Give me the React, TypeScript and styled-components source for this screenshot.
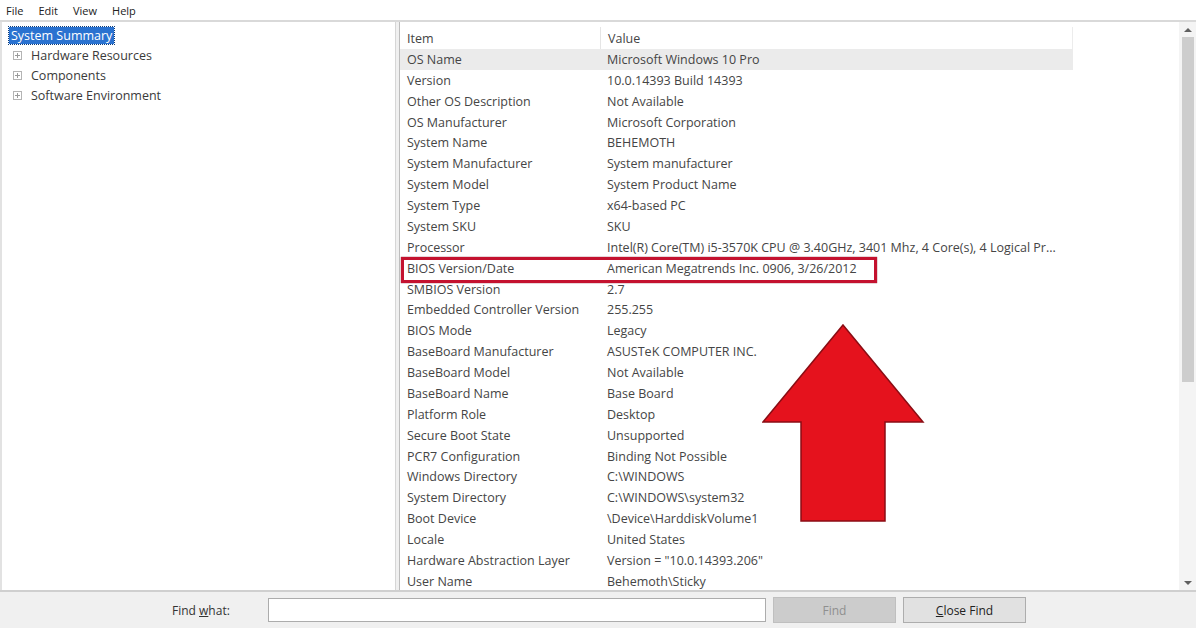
import styled, { createGlobalStyle } from 'styled-components'

const GlobalStyle = createGlobalStyle`
    *, *::before, *::after {
        box-sizing: border-box;
    }
    html, body {
        margin: 0;
        padding: 0;
        background: #ffffff;
    }
    body {
        font-family: "Open Sans", "Noto Sans", "Liberation Sans", sans-serif;
        color: #454545;
    }
`

const rows: [string, string][] = [
    ['OS Name', 'Microsoft Windows 10 Pro'],
    ['Version', '10.0.14393 Build 14393'],
    ['Other OS Description', 'Not Available'],
    ['OS Manufacturer', 'Microsoft Corporation'],
    ['System Name', 'BEHEMOTH'],
    ['System Manufacturer', 'System manufacturer'],
    ['System Model', 'System Product Name'],
    ['System Type', 'x64-based PC'],
    ['System SKU', 'SKU'],
    ['Processor', 'Intel(R) Core(TM) i5-3570K CPU @ 3.40GHz, 3401 Mhz, 4 Core(s), 4 Logical Pr...'],
    ['BIOS Version/Date', 'American Megatrends Inc. 0906, 3/26/2012'],
    ['SMBIOS Version', '2.7'],
    ['Embedded Controller Version', '255.255'],
    ['BIOS Mode', 'Legacy'],
    ['BaseBoard Manufacturer', 'ASUSTeK COMPUTER INC.'],
    ['BaseBoard Model', 'Not Available'],
    ['BaseBoard Name', 'Base Board'],
    ['Platform Role', 'Desktop'],
    ['Secure Boot State', 'Unsupported'],
    ['PCR7 Configuration', 'Binding Not Possible'],
    ['Windows Directory', 'C:\\WINDOWS'],
    ['System Directory', 'C:\\WINDOWS\\system32'],
    ['Boot Device', '\\Device\\HarddiskVolume1'],
    ['Locale', 'United States'],
    ['Hardware Abstraction Layer', 'Version = "10.0.14393.206"'],
    ['User Name', 'Behemoth\\Sticky'],
]

const Window = styled.div`
    width: 1196px;
    height: 628px;
    display: flex;
    flex-direction: column;
    overflow: hidden;
    background: #f0f0f0;
`

const MenuBar = styled.div`
    height: 22px;
    display: flex;
    align-items: center;
    gap: 15px;
    padding-left: 6px;
    background: #ffffff;
    font-size: 11px;
    color: #222;
    border-bottom: 2px solid #d9d9d9;
`

const Panes = styled.div`
    flex: 1;
    display: flex;
    min-height: 0;
    border-bottom: 2px solid #cfcfcf;
`

const TreePane = styled.div`
    width: 395px;
    background: #ffffff;
    border-left: 2px solid #e2e2e2;
    padding: 3px 0 0 7px;
    font-size: 12.5px;
`

const Splitter = styled.div`
    width: 5px;
    background: #f0f0f0;
    border-left: 1px solid #d6d6d6;
    border-right: 1px solid #bdbdbd;
`

const TreeItem = styled.div<{ $selected?: boolean }>`
    display: flex;
    align-items: center;
    height: 20px;
    gap: 7px;
    padding-left: ${(p) => (p.$selected ? '0' : '4px')};

    span.label {
        padding: 0 2px;
        line-height: 17px;
        color: ${(p) => (p.$selected ? '#ffffff' : '#3a3a3a')};
        background: ${(p) => (p.$selected ? '#2a72d0' : 'transparent')};
        outline: ${(p) => (p.$selected ? '1px dotted #0d3c7a' : 'none')};
    }
`

const Expander = styled.span`
    width: 9px;
    height: 9px;
    border: 1px solid #b4b4b4;
    position: relative;

    &::before, &::after {
        content: '';
        position: absolute;
        background: #9a9a9a;
    }
    &::before {
        left: 1px;
        right: 1px;
        top: 3px;
        height: 1px;
    }
    &::after {
        top: 1px;
        bottom: 1px;
        left: 3px;
        width: 1px;
    }
`

const ListPane = styled.div`
    flex: 1;
    position: relative;
    background: #ffffff;
    display: flex;
    overflow: hidden;
`

const Table = styled.div`
    width: 673px;
    padding-top: 5px;
    font-size: 12.5px;
`

const HeaderRow = styled.div`
    display: grid;
    grid-template-columns: 200px 1fr;
    height: 22px;
    align-items: center;
    color: #444;
    border-right: 1px solid #ececec;

    div {
        padding-left: 7px;
        height: 100%;
        display: flex;
        align-items: center;
    }
    div + div {
        border-left: 1px solid #e5e5e5;
    }
`

const Row = styled.div<{ $selected?: boolean; $marked?: boolean }>`
    position: relative;
    display: grid;
    grid-template-columns: 200px 1fr;
    height: 20.88px;
    align-items: center;
    background: ${(p) => (p.$selected ? '#ebebeb' : 'transparent')};

    div {
        padding-left: 7px;
        white-space: nowrap;
    }

    ${(p) =>
        p.$marked &&
        `
        &::after {
            content: '';
            position: absolute;
            left: 1px;
            top: -1px;
            width: 476px;
            height: 26px;
            border: 3px solid #c4122f;
            box-shadow: 0 0 1px #7a0a1a;
        }
    `}
`

const Scrollbar = styled.div`
    width: 17px;
    margin-left: auto;
    background: #f4f4f4;
    display: flex;
    flex-direction: column;
    align-items: center;
`

const ScrollArrow = styled.div<{ $down?: boolean }>`
    height: 15px;
    display: flex;
    align-items: center;
    justify-content: center;

    &::before {
        content: '';
        border-left: 4px solid transparent;
        border-right: 4px solid transparent;
        ${(p) => (p.$down ? 'border-top: 4px solid #606060;' : 'border-bottom: 4px solid #606060;')}
    }
`

const ScrollThumb = styled.div`
    width: 12px;
    height: 345px;
    background: #cdcdcd;
`

const ScrollTrack = styled.div`
    flex: 1;
`

const ArrowMark = styled.svg`
    position: absolute;
    left: 362px;
    top: 301px;
`

const FindBar = styled.div`
    height: 36px;
    display: flex;
    align-items: center;
    background: #f0f0f0;
    font-size: 12px;
    color: #333;
`

const FindLabel = styled.label`
    margin-left: 172px;
    width: 96px;
`

const FindInput = styled.div`
    width: 498px;
    height: 24px;
    background: #ffffff;
    border: 1px solid #acacac;
`

const FindButton = styled.div<{ $disabled?: boolean }>`
    width: 123px;
    height: 26px;
    margin-left: 7px;
    display: flex;
    align-items: center;
    justify-content: center;
    background: ${(p) => (p.$disabled ? '#cccccc' : '#e1e1e1')};
    border: 1px solid ${(p) => (p.$disabled ? '#bfbfbf' : '#adadad')};
    color: ${(p) => (p.$disabled ? '#8f8f8f' : '#222')};
`

export default function App() {
    return (
        <Window>
            <GlobalStyle />
            <MenuBar>
                <span>File</span>
                <span>Edit</span>
                <span>View</span>
                <span>Help</span>
            </MenuBar>
            <Panes>
                <TreePane>
                    <TreeItem $selected>
                        <span className="label">System Summary</span>
                    </TreeItem>
                    <TreeItem>
                        <Expander />
                        <span className="label">Hardware Resources</span>
                    </TreeItem>
                    <TreeItem>
                        <Expander />
                        <span className="label">Components</span>
                    </TreeItem>
                    <TreeItem>
                        <Expander />
                        <span className="label">Software Environment</span>
                    </TreeItem>
                </TreePane>
                <Splitter />
                <ListPane>
                    <Table>
                        <HeaderRow>
                            <div>Item</div>
                            <div>Value</div>
                        </HeaderRow>
                        {rows.map(([item, value], i) => (
                            <Row key={item} $selected={i === 0} $marked={item === 'BIOS Version/Date'}>
                                <div>{item}</div>
                                <div>{value}</div>
                            </Row>
                        ))}
                    </Table>
                    <Scrollbar>
                        <ScrollArrow />
                        <ScrollThumb />
                        <ScrollTrack />
                        <ScrollArrow $down />
                    </Scrollbar>
                    <ArrowMark width="164" height="202" viewBox="0 0 164 202">
                        <polygon
                            points="81,2 161,99 123,99 123,198 39,198 39,99 1,99"
                            fill="#e5121d"
                            stroke="#8a0d14"
                            strokeWidth="1.5"
                        />
                    </ArrowMark>
                </ListPane>
            </Panes>
            <FindBar>
                <FindLabel>
                    Find <u>w</u>hat:
                </FindLabel>
                <FindInput />
                <FindButton $disabled>Find</FindButton>
                <FindButton>
                    <span><u>C</u>lose Find</span>
                </FindButton>
            </FindBar>
        </Window>
    )
}
